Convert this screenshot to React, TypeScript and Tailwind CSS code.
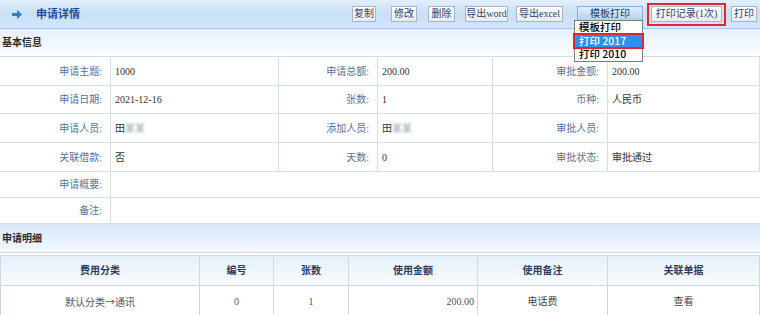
import React from 'react';

const cn = "font-['Liberation_Serif','Noto_Sans_CJK_SC',serif]";

type Cell = { label: string; value: React.ReactNode };

const Masked = ({ first }: { first: string }) => (
    <span>
        {first}
        <span className="inline-block blur-[1.2px] text-[#9aa]">某某</span>
    </span>
);

const infoRows: { h: string; cells: Cell[] }[] = [
    {
        h: 'h-[29px]',
        cells: [
            { label: '申请主题:', value: '1000' },
            { label: '申请总额:', value: '200.00' },
            { label: '审批金额:', value: '200.00' },
        ],
    },
    {
        h: 'h-[28px]',
        cells: [
            { label: '申请日期:', value: '2021-12-16' },
            { label: '张数:', value: '1' },
            { label: '币种:', value: '人民币' },
        ],
    },
    {
        h: 'h-[29px]',
        cells: [
            { label: '申请人员:', value: <Masked first="田" /> },
            { label: '添加人员:', value: <Masked first="田" /> },
            { label: '审批人员:', value: '' },
        ],
    },
    {
        h: 'h-[29px]',
        cells: [
            { label: '关联借款:', value: '否' },
            { label: '天数:', value: '0' },
            { label: '审批状态:', value: '审批通过' },
        ],
    },
];

const Btn = ({ label, w }: { label: string; w: string }) => (
    <button
        className={`flex h-[16px] ${w} items-center justify-center border border-[#a7b5c7] bg-linear-to-b from-white to-[#e6ecf3] text-[10px] leading-none text-[#2c4569]`}
    >
        {label}
    </button>
);

const App: React.FC = () => {
    return (
        <div className={`w-[760px] h-[315px] overflow-hidden bg-white ${cn}`}>
            {/* 顶部标题栏 */}
            <div className="flex h-[29px] items-center border-b border-[#a8c5e3] bg-linear-to-b from-[#e3effb] via-[#c8dff6] to-[#d4e7f9]">
                <svg className="ml-[12px]" width="10" height="9" viewBox="0 0 10 9">
                    <path d="M0 3h5V0l5 4.5L5 9V6H0z" fill="#2f80d2" />
                </svg>
                <span className="ml-[14px] text-[11px] font-bold text-[#1c4d9a]">申请详情</span>

                <div className="ml-auto mr-[3px] flex items-center">
                    <Btn label="复制" w="w-[24px]" />
                    <div className="ml-[15px]"><Btn label="修改" w="w-[26px]" /></div>
                    <div className="ml-[11px]"><Btn label="删除" w="w-[27px]" /></div>
                    <div className="ml-[10px]"><Btn label="导出word" w="w-[43px]" /></div>
                    <div className="ml-[8px]"><Btn label="导出excel" w="w-[47px]" /></div>

                    {/* 模板打印 + 下拉 */}
                    <div className="relative ml-[14px]">
                        <button className="flex h-[16px] w-[66px] items-center justify-center border border-[#8eadd4] bg-linear-to-b from-[#e3eefa] to-[#b2cdec] text-[10px] leading-none text-[#223a5e]">
                            模板打印
                        </button>
                        <div className="absolute left-[-3px] top-[14px] z-10 w-[69px] border border-[#7c7c7c] bg-white text-[10.5px] font-medium text-black font-['Noto_Sans_CJK_SC',sans-serif]">
                            <div className="flex h-[13px] items-center pl-[4px] leading-none">模板打印</div>
                            <div className="relative flex h-[14px] items-center bg-[#2f8ff0] pl-[4px] leading-none text-white">
                                打印 2017
                                <span className="absolute inset-x-[-2px] inset-y-[-1px] border-2 border-[#e3262b]" />
                            </div>
                            <div className="flex h-[13px] items-center pl-[4px] leading-none">打印 2010</div>
                        </div>
                    </div>

                    {/* 打印记录（红框） */}
                    <div className="ml-[4px] flex h-[23px] w-[79px] items-center justify-center border-2 border-[#e3262b]">
                        <Btn label="打印记录(1次)" w="w-[71px]" />
                    </div>
                    <div className="ml-[5px]"><Btn label="打印" w="w-[26px]" /></div>
                </div>
            </div>

            {/* 基本信息 */}
            <div className="flex h-[28px] items-center border-b border-[#d3dce7] bg-linear-to-b from-[#e6f0fa] to-[#fbfdff] pl-[2px] text-[10px] font-bold text-[#2b2b2b]">
                基本信息
            </div>

            <div className="grid grid-cols-[111px_168px_99px_115px_115px_152px] text-[10px]">
                {infoRows.map((row, i) =>
                    row.cells.map((c, j) => (
                        <React.Fragment key={`${i}-${j}`}>
                            <div className={`flex ${row.h} items-center justify-end border-b border-r border-[#d6dee8] pr-[8px] text-[#5673a0]`}>
                                {c.label}
                            </div>
                            <div className={`flex ${row.h} items-center border-b border-r border-[#d6dee8] pl-[4px] text-[#333]`}>
                                {c.value}
                            </div>
                        </React.Fragment>
                    ))
                )}
                <div className="flex h-[26px] items-center justify-end border-b border-r border-[#d6dee8] pr-[8px] text-[#5673a0]">申请概要:</div>
                <div className="col-span-5 h-[26px] border-b border-[#d6dee8]" />
                <div className="flex h-[26px] items-center justify-end border-b border-r border-[#d6dee8] pr-[8px] text-[#5673a0]">备注:</div>
                <div className="col-span-5 h-[26px] border-b border-[#d6dee8]" />
            </div>

            {/* 申请明细 */}
            <div className="flex h-[29px] items-center border-b border-[#cdd8e4] bg-linear-to-b from-[#d9e8f8] to-[#f4f8fd] pl-[2px] text-[10px] font-bold text-[#2b2b2b]">
                申请明细
            </div>

            <div className="mt-[2px] grid grid-cols-[199px_74px_75px_129px_130px_152px] border-l border-t border-[#cfd9e5] text-[10px]">
                {['费用分类', '编号', '张数', '使用金额', '使用备注', '关联单据'].map((h) => (
                    <div
                        key={h}
                        className="flex h-[30px] items-center justify-center border-b border-r border-[#cfd9e5] bg-linear-to-b from-[#e6f0fa] to-[#f8fbfe] font-bold text-[#2c3d5d]"
                    >
                        {h}
                    </div>
                ))}
                <div className="flex h-[30px] items-center justify-center border-r border-[#cfd9e5] text-[#555] font-['Noto_Sans_CJK_SC',sans-serif]">默认分类→通讯</div>
                <div className="flex h-[30px] items-center justify-center border-r border-[#cfd9e5] text-[#555]">0</div>
                <div className="flex h-[30px] items-center justify-center border-r border-[#cfd9e5] text-[#555]">1</div>
                <div className="flex h-[30px] items-center justify-end border-r border-[#cfd9e5] pr-[3px] text-[#555]">200.00</div>
                <div className="flex h-[30px] items-center justify-center border-r border-[#cfd9e5] text-[#444]">电话费</div>
                <div className="flex h-[30px] items-center justify-center border-r border-[#cfd9e5] text-[#444]">查看</div>
            </div>
        </div>
    );
};

export default App;
